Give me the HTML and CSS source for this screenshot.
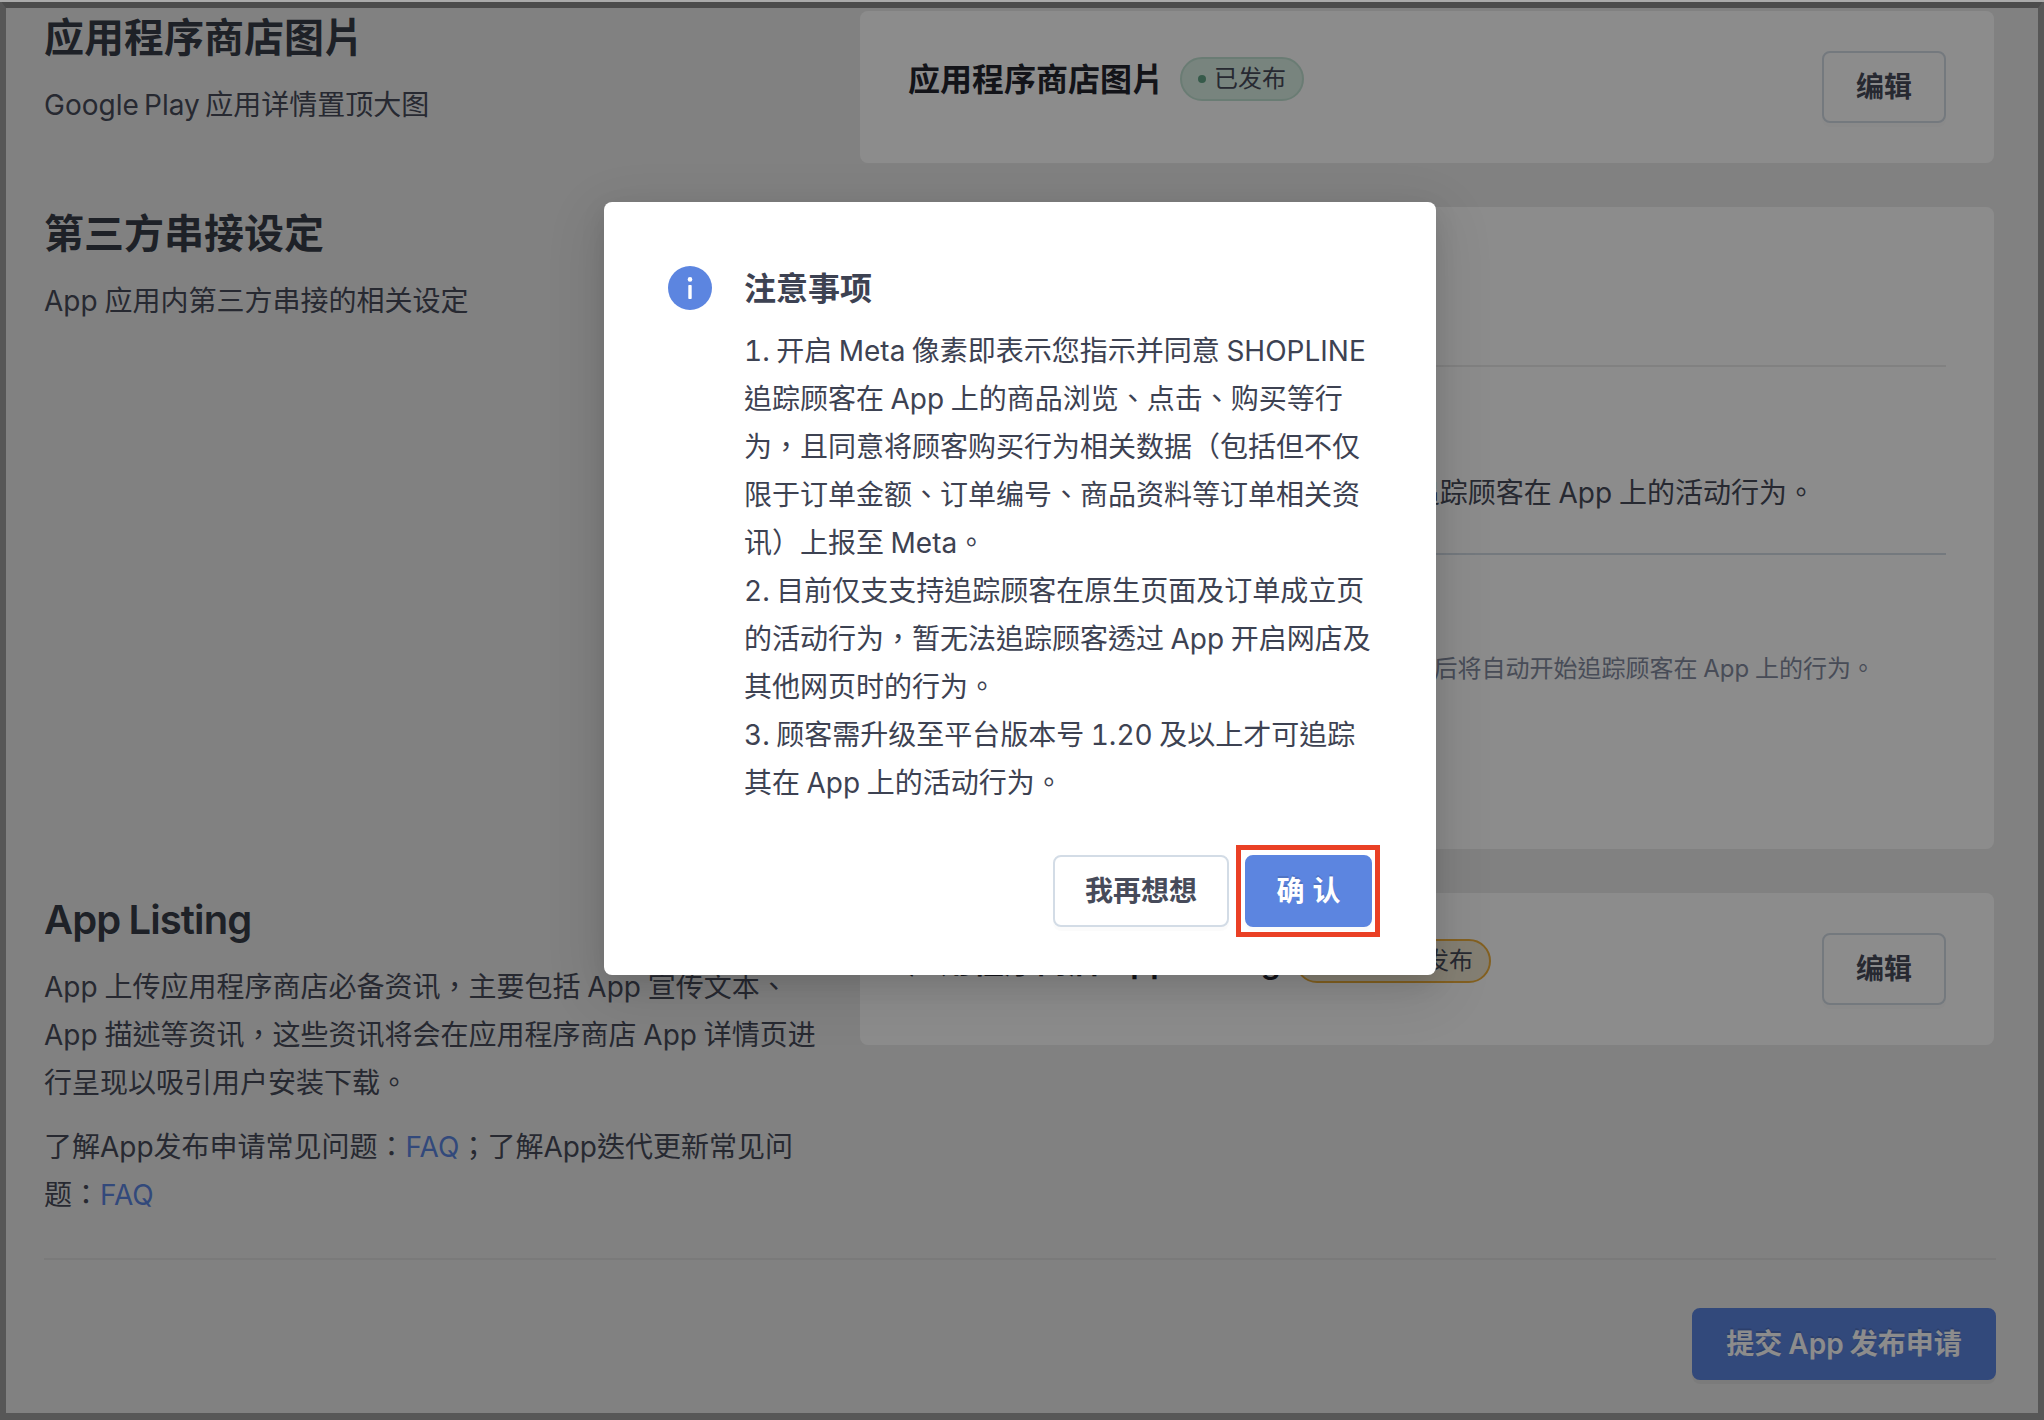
FILE: index.html
```html
<!DOCTYPE html>
<html lang="zh-Hant">
<head>
  <meta charset="UTF-8">
  <meta name="viewport" content="width=device-width, initial-scale=1.0">
  <title>App 发布</title>
  <link rel="stylesheet" href="styles.css">
</head>
<body>

  <div class="window">
    <main class="page">

      <!-- 应用程序商店图片 -->
      <section class="section">
        <div class="intro">
          <h2>应用程序商店图片</h2>
          <p class="tight">Google Play 应用详情置顶大图</p>
        </div>
        <div class="card card-row">
          <h3>应用程序商店图片</h3>
          <span class="badge badge-success">已发布</span>
          <button class="btn btn-edit">编辑</button>
        </div>
      </section>

      <!-- 第三方串接设定 -->
      <section class="section section-third">
        <div class="intro">
          <h2>第三方串接设定</h2>
          <p>App 应用内第三方串接的相关设定</p>
        </div>
        <div class="card card-pixel">
          <div class="pixel-head"></div>
          <div class="pixel-desc">追踪顾客在 App 上的活动行为。</div>
          <div class="pixel-hint">开启后将自动开始追踪顾客在 App 上的行为。</div>
        </div>
      </section>

      <!-- App Listing -->
      <section class="section">
        <div class="intro">
          <h2 class="latin">App Listing</h2>
          <p>App 上传应用程序商店必备资讯，主要包括 App 宣传文本、<br>App 描述等资讯，这些资讯将会在应用程序商店 App 详情页进<br>行呈现以吸引用户安装下载。</p>
          <p>了解App发布申请常见问题：<a href="#">FAQ</a>；了解App迭代更新常见问<br>题：<a href="#">FAQ</a></p>
        </div>
        <div class="card card-row">
          <h3 class="listing-title">应用程序商店 App Listing</h3>
          <span class="badge badge-warning">更新后待发布</span>
          <button class="btn btn-edit">编辑</button>
        </div>
      </section>

      <footer class="footer">
        <button class="btn btn-primary">提交 App 发布申请</button>
      </footer>
    </main>

    <!-- 弹窗 -->
    <div class="mask">
      <div class="modal">
        <div class="modal-body">
          <svg class="info-icon" viewBox="0 0 44 44" width="44" height="44">
            <circle cx="22" cy="22" r="22" fill="#5c85e0"/>
            <circle cx="22" cy="13.4" r="2.3" fill="#fff"/>
            <rect x="20.3" y="19" width="3.4" height="14" rx="0.8" fill="#fff"/>
          </svg>
          <div class="modal-text">
            <h3>注意事项</h3>
            <p>1. 开启 Meta 像素即表示您指示并同意 SHOPLINE<br>追踪顾客在 App 上的商品浏览、点击、购买等行<br>为，且同意将顾客购买行为相关数据（包括但不仅<br>限于订单金额、订单编号、商品资料等订单相关资<br>讯）上报至 Meta。</p>
            <p>2. 目前仅支支持追踪顾客在原生页面及订单成立页<br>的活动行为，暂无法追踪顾客透过 App 开启网店及<br>其他网页时的行为。</p>
            <p>3. 顾客需升级至平台版本号 1.20 及以上才可追踪<br>其在 App 上的活动行为。</p>
          </div>
        </div>
        <div class="modal-footer">
          <button class="btn btn-cancel">我再想想</button>
          <div class="confirm-wrap">
            <button class="btn btn-confirm"><span>确</span><span>认</span></button>
          </div>
        </div>
      </div>
    </div>
  </div>

</body>
</html>
```
FILE: styles.css
```css
* {
  box-sizing: border-box;
}

body {
  margin: 0;
  font-family: Inter, "Noto Sans CJK TC", sans-serif;
  font-size: 28px;
  line-height: 48px;
  word-spacing: -1px;
  color: #474b5a;
  text-spacing-trim: space-all;
  -webkit-font-smoothing: antialiased;
}

h2, h3, p {
  margin: 0;
}

/* 外框 */
.window {
  position: relative;
  width: 2044px;
  height: 1420px;
  overflow: hidden;
  border: solid #575757;
  border-width: 8px 6px 7px;
  border-top-color: #4c4c4c;
  background: #ececec;
}

body::before {
  content: "";
  position: absolute;
  z-index: 2;
  top: 0;
  left: 0;
  width: 2044px;
  height: 2px;
  background: #aaa;
}

.page {
  padding: 3px 42px 0 38px;
}

/* 每个区块：左侧说明，右侧卡片 */
.section {
  display: grid;
  grid-template-columns: 784px 1134px;
  column-gap: 32px;
  align-items: start;
  margin-bottom: 44px;
}

.intro h2 {
  margin-bottom: 17px;
  padding-top: 1px;
  font-size: 40px;
  line-height: 52px;
  font-weight: 700;
  color: #373c48;
}

.intro h2.latin {
  font-weight: 600;
  letter-spacing: -0.9px;
}

.intro p + p {
  margin-top: 16px;
}

.intro .tight {
  word-spacing: -2.5px;
}

.intro a {
  color: #5c85e0;
  text-decoration: none;
}

.card {
  padding: 0 48px;
  border-radius: 8px;
  background: #fff;
}

.card h3 {
  font-size: 32px;
  line-height: 46px;
  font-weight: 600;
  color: #24262e;
  white-space: nowrap;
}

.card-row {
  display: flex;
  align-items: flex-start;
  height: 152px;
  padding-top: 40px;
}

.card-row h3,
.card-row .badge {
  margin-top: 6px;
}

.card .listing-title {
  width: 371px;
}

/* 状态标签 */
.badge {
  display: flex;
  align-items: center;
  gap: 8px;
  height: 44px;
  margin-left: 16px;
  padding: 0 16px;
  border: 2px solid;
  border-radius: 22px;
  font-size: 24px;
  line-height: 40px;
  white-space: nowrap;
}

.badge::before {
  content: "";
  width: 8px;
  height: 8px;
  border-radius: 50%;
}

.badge-success {
  border-color: #c2e2d3;
  background: #daf0e5;
}

.badge-success::before {
  background: #63a587;
}

.badge-warning {
  border-color: #efb03c;
  background: #f1e7d2;
}

.badge-warning::before {
  background: #efb03c;
}

/* 按钮 */
.btn {
  height: 72px;
  padding: 0 32px;
  border: 2px solid #d3dce6;
  border-radius: 8px;
  background: #fff;
  box-shadow: 0 4px 0 rgba(0, 0, 0, 0.016);
  font: inherit;
  font-weight: 600;
  line-height: 68px;
  word-spacing: inherit;
  color: #474b5a;
  white-space: nowrap;
}

.btn-edit {
  margin-left: auto;
}

.btn-primary {
  width: 304px;
  padding: 0;
  border-color: #5c85e0;
  background: #5c85e0;
  box-shadow: 0 4px 0 rgba(0, 0, 0, 0.045);
  color: #fff;
  text-shadow: 0 -2px 0 rgba(0, 0, 0, 0.12);
}

/* 第三方卡片 */
.card-pixel {
  height: 642px;
}

.pixel-head {
  height: 160px;
  border-bottom: 2px solid #ebebeb;
}

.pixel-desc {
  height: 188px;
  padding: 102px 131px 0 0;
  border-bottom: 2px solid #d3dce6;
  text-align: right;
}

.pixel-hint {
  padding: 90px 71px 0 0;
  font-size: 24px;
  text-align: right;
  color: #848b9f;
}

.footer {
  display: flex;
  justify-content: flex-end;
  width: 1952px;
  margin-top: -5px;
  padding-top: 48px;
  border-top: 2px solid #dfdfdf;
}

/* 遮罩与弹窗 */
.mask {
  position: absolute;
  inset: 0;
  display: flex;
  justify-content: center;
  align-items: flex-start;
  padding: 194px 4px 0 0;
  background: rgba(0, 0, 0, 0.45);
}

.modal {
  width: 832px;
  height: 773px;
  padding: 64px 64px 48px;
  border-radius: 8px;
  background: #fff;
  box-shadow: 0 8px 24px rgba(0, 0, 0, 0.1), 0 16px 56px 8px rgba(0, 0, 0, 0.09);
  color: #3d4252;
}

.modal-body {
  display: flex;
  gap: 32px;
}

.info-icon {
  flex: none;
}

.modal-text h3 {
  margin-bottom: 16px;
  padding-top: 1px;
  font-size: 32px;
  line-height: 44px;
  font-weight: 700;
}

.modal-text p {
  font-variant-numeric: tabular-nums;
  white-space: nowrap;
}

.modal-footer {
  display: flex;
  justify-content: flex-end;
  margin-top: 38px;
}

.btn-cancel {
  width: 176px;
  margin-top: 10px;
  padding: 0;
}

/* 红框标注 */
.confirm-wrap {
  margin: 0 -8px 0 7px;
  padding: 5px 3px 5px 4px;
  border: 5px solid #ea4025;
}

.btn-confirm {
  display: flex;
  justify-content: center;
  gap: 8px;
  width: 127px;
  padding: 0;
  border-color: #5c85e0;
  background: #5c85e0;
  color: #fff;
  text-shadow: 0 -2px 0 rgba(0, 0, 0, 0.12);
}
```
